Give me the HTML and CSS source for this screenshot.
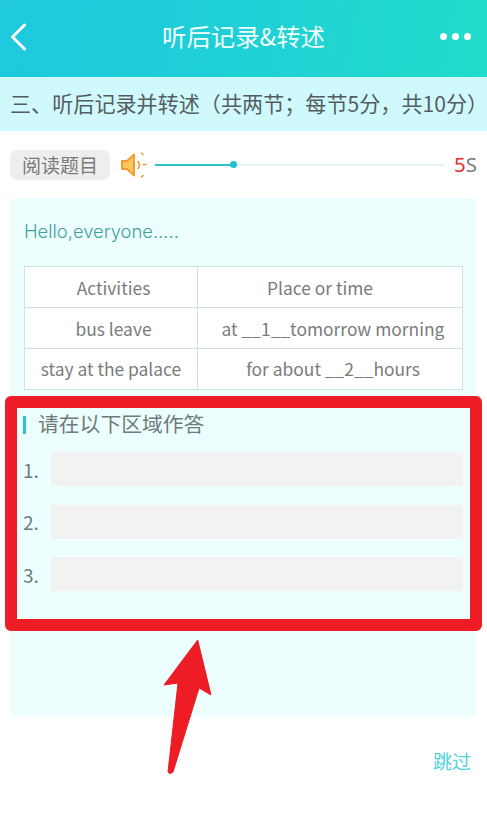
FILE: index.html
```html
<!DOCTYPE html>
<html lang="zh">
<head>
<meta charset="utf-8">
<title>听后记录&amp;转述</title>
<link rel="stylesheet" href="styles.css">
</head>
<body>
<div class="page">
  <header class="topbar">
    <div class="side"><svg class="back" width="16" height="28" viewBox="0 0 16 28"><path d="M14.5 2 L2.5 14 L14.5 26" fill="none" stroke="#fff" stroke-width="3" stroke-linecap="round" stroke-linejoin="round"/></svg></div>
    <h1 class="title">听后记录&amp;转述</h1>
    <div class="side side-end"><div class="dots"><i></i><i></i><i></i></div></div>
  </header>
  <div class="section">三、听后记录并转述（共两节；每节5分，共10分）</div>
  <div class="player">
    <span class="tag">阅读题目</span>
    <svg class="speaker" width="28" height="28" viewBox="0 0 28 28">
      <path d="M2 10 H7 L14 3.5 V24.5 L7 18 H2 Z" fill="#fcc75c" stroke="#f59a3c" stroke-width="2" stroke-linejoin="round"/>
      <path d="M18 10.5 Q21 14 18 17.5" fill="none" stroke="#f59a3c" stroke-width="1.6" stroke-linecap="round"/>
      <path d="M23 13.5 H26 M21.5 2 L23 3.5 M21.5 26 L23 24.5" fill="none" stroke="#f59a3c" stroke-width="1.6" stroke-linecap="round"/>
    </svg>
    <div class="track"><div class="fill"></div><div class="thumb"></div></div>
    <span class="time"><b>5</b>S</span>
  </div>
  <main class="card">
    <p class="hello">Hello,everyone.....</p>
    <table class="grid">
      <tr class="low"><td class="c1 nudge">Activities</td><td class="head2">Place or time</td></tr>
      <tr class="low"><td class="c1 nudge">bus leave</td><td class="nudge-s">at __1__tomorrow morning</td></tr>
      <tr><td class="c1">stay at the palace</td><td class="nudge-s">for about __2__hours</td></tr>
    </table>
    <h2 class="answer-title">请在以下区域作答</h2>
    <div class="row"><span class="num">1.</span><div class="input"></div></div>
    <div class="row"><span class="num">2.</span><div class="input"></div></div>
    <div class="row"><span class="num">3.</span><div class="input"></div></div>
  </main>
  <div class="skip">跳过</div>
  <div class="redbox"></div>
  <svg class="arrow" width="60" height="140" viewBox="0 0 60 140"><path d="M37.7 5 L51 60 L39 53 L13 137 Q10 140 8 137 L18 48 L4 50 Z" fill="#ee1c25" stroke="#ee1c25" stroke-width="1" stroke-linejoin="round"/></svg>
</div>
</body>
</html>
```
FILE: styles.css
```css
* { box-sizing: border-box; }
html, body { margin: 0; padding: 0; background: #fff; }
body { font-family: "Noto Sans CJK SC", "Noto Sans", sans-serif; }
.page { position: relative; width: 487px; height: 816px; overflow: hidden; background: #fff; }

.topbar {
  height: 77px; padding: 0 16px 4px 10px;
  display: flex; align-items: center; justify-content: space-between;
  background: linear-gradient(100deg, #1fc8de 0%, #1fd0d6 50%, #21dcc9 100%);
}
.side { width: 42px; display: flex; }
.side-end { width: 36px; justify-content: flex-end; }
.title { margin: 0; font: 400 24.4px/1 "Noto Sans CJK SC", sans-serif; color: #f0fdfd; }
.back { display: block; }
.dots { display: flex; gap: 5px; }
.dots i { display: block; width: 7px; height: 7px; border-radius: 50%; background: #fff; }

.section {
  height: 54px; padding: 0 0 0 10px;
  display: flex; align-items: center;
  background: #cff9fd; color: #555d5f;
  font: 400 21.1px/1 "Noto Sans CJK SC", sans-serif; white-space: nowrap;
}

.player { height: 67px; padding: 0 12px 0 10px; display: flex; align-items: center; }
.tag {
  flex: none; width: 100px; height: 30px; margin-right: 10px; border-radius: 7px;
  display: flex; align-items: center; justify-content: center;
  background: #eeeeee; color: #7a7a7a; font: 400 19px/1 "Noto Sans CJK SC", sans-serif;
}
.speaker { flex: none; margin-right: 7px; }
.track { position: relative; flex: none; width: 289px; height: 2px; margin: 0 10px 0 0; background: #e2f5f5; }
.fill { width: 78px; height: 2px; background: #2cc2d0; }
.thumb { position: absolute; left: 75px; top: -2.5px; width: 7px; height: 7px; border-radius: 50%; background: #22c0d2; }
.time { font: 400 20.5px/1 "Noto Sans", sans-serif; color: #777; }
.time b { font-weight: 400; color: #ee2a30; }

.card {
  width: 466px; height: 519px; margin-left: 10px; padding: 0 13px 0 14px;
  background: #ecfefd; border-radius: 6px;
}
.hello { margin: 0; padding-top: 22px; height: 68px; font: 300 18.4px/22px "Inter", sans-serif; color: #3fa39d; white-space: nowrap; }
.grid { width: 439px; height: 124px; border-collapse: collapse; background: #fff; table-layout: fixed; color: #7b7b7b; font-size: 17.4px; line-height: 1.2; }
.grid td { height: 41px; padding: 0; border: 1px solid #cfe2e2; text-align: center; }
.grid .c1 { width: 173px; }
.grid .low td { padding-top: 3px; }
.grid .nudge { padding-left: 5px; }
.grid .nudge-s { padding-left: 6px; }
.grid .head2 { padding-right: 20px; }
.answer-title {
  margin: 26px 0 18px -1px; padding: 0 0 4px 12px; height: 18px;
  display: flex; align-items: center;
  border-left: 3px solid #26c6d6;
  font: 400 20.8px/1 "Noto Sans CJK SC", sans-serif; color: #6f7b7b;
}
.row { display: flex; align-items: center; margin-bottom: 18.5px; }
.num { width: 28px; margin-left: -1px; font-size: 19px; line-height: 1; color: #6f7b7b; }
.input { width: 412px; height: 34px; background: #f2f2f2; }

.skip {
  margin: 32px 16px 0 0; text-align: right;
  font: 400 19px/24px "Noto Sans CJK SC", sans-serif; color: #4fd2de;
}

.redbox { position: absolute; left: 5px; top: 396px; width: 477px; height: 235px; border: 12px solid #ee1c25; border-radius: 6px; }
.arrow { position: absolute; left: 160px; top: 635px; }
```
